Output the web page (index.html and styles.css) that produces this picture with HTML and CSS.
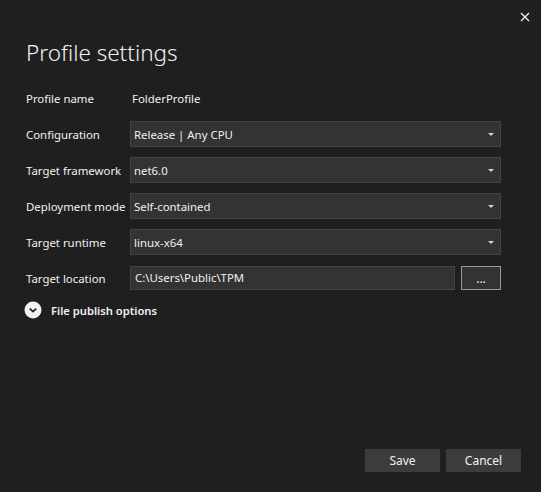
FILE: index.html
```html
<!DOCTYPE html>
<html lang="en">
<head>
    <meta charset="UTF-8">
    <title>Profile settings</title>
    <link rel="stylesheet" href="styles.css">
</head>
<body>
    <div class="dialog">
        <div class="topbar">
            <button class="close" title="Close">
                <svg width="10" height="10" viewBox="0 0 10 10"><path d="M1 1L9 9M9 1L1 9" stroke="#f1f1f1" stroke-width="1.3"/></svg>
            </button>
        </div>

        <h1 class="title">Profile settings</h1>

        <div class="form">
            <div class="label">Profile name</div>
            <div class="value">FolderProfile</div>

            <div class="label">Configuration</div>
            <div class="select"><span>Release | Any CPU</span><i class="arrow"></i></div>

            <div class="label">Target framework</div>
            <div class="select"><span>net6.0</span><i class="arrow"></i></div>

            <div class="label">Deployment mode</div>
            <div class="select"><span>Self-contained</span><i class="arrow"></i></div>

            <div class="label">Target runtime</div>
            <div class="select"><span>linux-x64</span><i class="arrow"></i></div>

            <div class="label">Target location</div>
            <div class="location">
                <div class="textbox">C:\Users\Public\TPM</div>
                <button class="browse">...</button>
            </div>
        </div>

        <div class="expander">
            <span class="chevron">
                <svg width="18" height="18" viewBox="0 0 18 18"><circle cx="9" cy="9" r="8.5" fill="#f1f1f1"/><path d="M5.8 7.6L9 10.6L12.2 7.6" fill="none" stroke="#1f1f1f" stroke-width="1.8"/></svg>
            </span>
            <span>File publish options</span>
        </div>

        <div class="footer">
            <button class="btn">Save</button>
            <button class="btn">Cancel</button>
        </div>
    </div>
</body>
</html>
```

FILE: styles.css
```css
body {
    margin: 0;
    background: #1f1f1f;
    color: #f1f1f1;
    font-family: 'Noto Sans', 'Open Sans', sans-serif;
    font-size: 11.4px;
}
.dialog {
    height: 100vh;
    display: flex;
    flex-direction: column;
    box-sizing: border-box;
    padding: 0 20px 20px 26px;
}
.topbar {
    display: flex;
    justify-content: flex-end;
    height: 14px;
    padding-top: 11px;
    margin-right: -10px;
}
.close {
    background: none;
    border: none;
    padding: 0;
    width: 12px;
    height: 12px;
    display: flex;
    align-items: center;
    justify-content: center;
}
.title {
    margin: 13px 0 0 0;
    font-size: 22.5px;
    font-weight: 300;
    line-height: 30px;
}
.form {
    display: grid;
    grid-template-columns: 104px 371px;
    grid-auto-rows: 26px;
    row-gap: 10px;
    margin-top: 17px;
    align-items: center;
}
.label {
    white-space: nowrap;
}
.value {
    padding-left: 2px;
}
.select {
    height: 26px;
    box-sizing: border-box;
    background: #333333;
    border: 1px solid #434343;
    display: flex;
    align-items: center;
    justify-content: space-between;
    padding: 0 6px 0 3px;
}
.arrow {
    width: 0;
    height: 0;
    border-left: 3px solid transparent;
    border-right: 3px solid transparent;
    border-top: 3px solid #d0d0d0;
}
.location {
    display: flex;
    gap: 6px;
    height: 24px;
}
.textbox {
    flex: 1;
    box-sizing: border-box;
    background: #333333;
    border: 1px solid #434343;
    padding: 0 4px;
    line-height: 22px;
}
.browse {
    width: 40px;
    box-sizing: border-box;
    background: #333333;
    border: 1px solid #999999;
    color: #f1f1f1;
    font-family: inherit;
    font-size: 12px;
    padding: 0;
}
.expander {
    display: flex;
    align-items: center;
    gap: 9px;
    margin-top: 10px;
    margin-left: -2px;
    font-weight: 600;
    font-size: 11.2px;
}
.chevron {
    display: flex;
}
.footer {
    margin-top: auto;
    display: flex;
    justify-content: flex-end;
    gap: 6px;
}
.btn {
    width: 75px;
    height: 23px;
    background: #3c3c3c;
    border: none;
    color: #f1f1f1;
    font-family: inherit;
    font-size: 12px;
    padding: 0;
}
```
